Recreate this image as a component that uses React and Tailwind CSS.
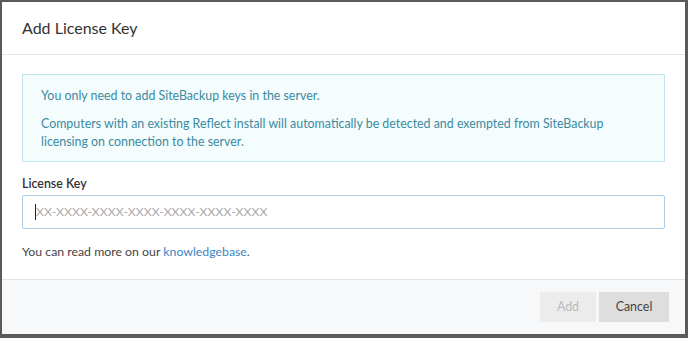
export default function App() {
  return (
    <div className="w-[688px] h-[338px] bg-[#5a5a5a] pl-[2px] pt-[2px] font-['Lato',sans-serif]">
      <div className="w-[683px] h-[332px] bg-white flex flex-col">
        <div className="h-[53px] border-b border-[#e5e5e5] px-[20px] flex items-center">
          <h1 className="text-[16px] text-[#333]">Add License Key</h1>
        </div>
        <div className="flex-1 px-[20px] pt-[19px]">
          <div className="border border-[#bfe4ec] bg-[#f5fcfd] px-[18px] pt-[12px] pb-[10px] text-[12.4px] leading-[18px] text-[#3a8aa1]">
            <p>You only need to add SiteBackup keys in the server.</p>
            <p className="mt-[10px]">
              Computers with an existing Reflect install will automatically be detected and exempted from SiteBackup licensing on connection to the server.
            </p>
          </div>
          <label className="block mt-[13px] text-[12.4px] leading-[18px] font-semibold text-[#333]">License Key</label>
          <div className="mt-[2px] h-[34px] border border-[#a9cde6] rounded-[2px] flex items-center px-[12px]">
            <span className="w-px h-[16px] bg-[#222]" />
            <span className="text-[12.3px] text-[#aaa]">XX-XXXX-XXXX-XXXX-XXXX-XXXX-XXXX</span>
          </div>
          <p className="mt-[14px] text-[12.3px] leading-[18px] text-[#444]">
            You can read more on our <a className="text-[#3b84c4]">knowledgebase</a>.
          </p>
        </div>
        <div className="h-[55px] border-t border-[#e3e3e3] bg-[#f7f8f9] flex items-center justify-end gap-[3px] pr-[16px]">
          <button className="w-[56px] h-[30px] bg-[#ececec] text-[12.4px] text-[#bbb]">Add</button>
          <button className="w-[70px] h-[30px] bg-[#dedede] text-[12.4px] text-[#444]">Cancel</button>
        </div>
      </div>
    </div>
  )
}
